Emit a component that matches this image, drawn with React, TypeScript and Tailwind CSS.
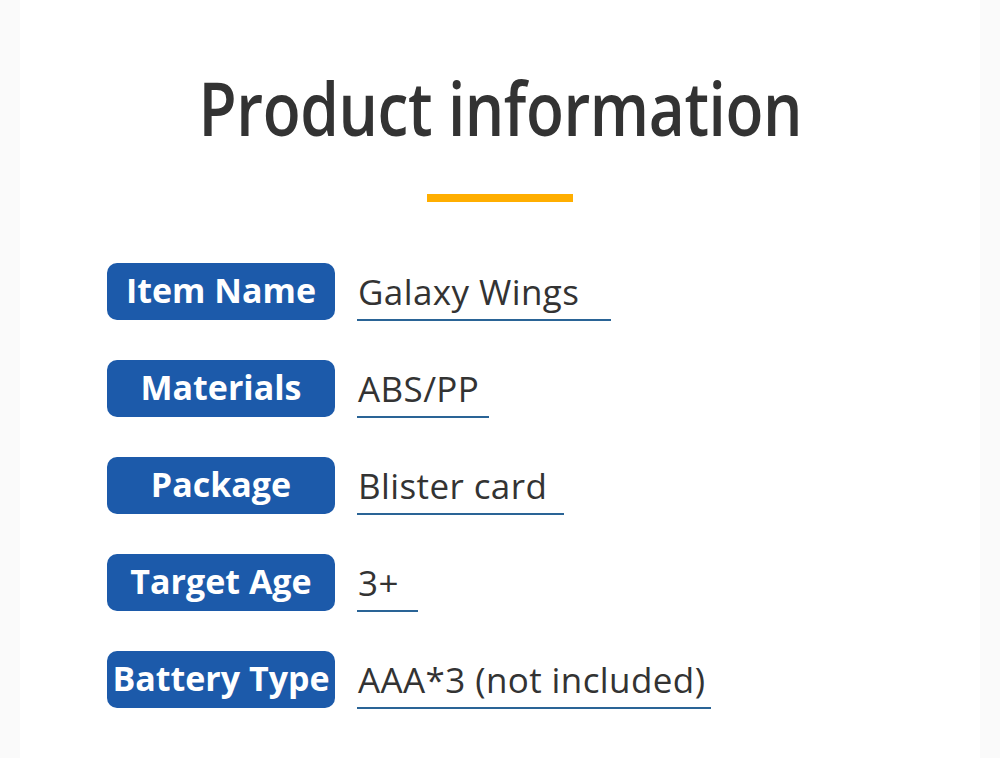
import React from "react";

const rows = [
  { label: "Item Name", value: "Galaxy Wings", w: 254 },
  { label: "Materials", value: "ABS/PP", w: 132 },
  { label: "Package", value: "Blister card", w: 207 },
  { label: "Target Age", value: "3+", w: 61 },
  { label: "Battery Type", value: "AAA*3 (not included)", w: 354 },
];

export default function App() {
  return (
    <div
      className="w-[1000px] h-[758px] bg-[#fafafa] flex justify-center overflow-hidden"
      style={{ fontFamily: '"Open Sans", "Noto Sans", sans-serif' }}
    >
      <div className="w-[960px] h-full bg-white flex flex-col items-center">
        <h1 className="mt-[62px] text-[74px] leading-[92px] font-semibold text-[#333333] tracking-[-0.5px] whitespace-nowrap scale-x-[0.84]">
          Product information
        </h1>
        <div className="mt-[40px] w-[146px] h-[8px] bg-[#ffae00]" />
        <div className="mt-[61px] self-start ml-[87px] flex flex-col gap-[40px]">
          {rows.map((r) => (
            <div key={r.label} className="flex items-start h-[57px]">
              <div className="w-[228px] h-[57px] rounded-[10px] bg-[#1c5aaa] flex items-center justify-center text-white text-[34px] font-bold leading-none pb-[3px] whitespace-nowrap">
                {r.label}
              </div>
              <div className="ml-[22px] flex flex-col">
                <div className="h-[56px] flex items-center text-[35px] leading-none tracking-[0.4px] text-[#333333] pl-[1px] pt-[1px] whitespace-nowrap">
                  {r.value}
                </div>
                <div className="h-[2px] bg-[#2a6496]" style={{ width: r.w }} />
              </div>
            </div>
          ))}
        </div>
      </div>
    </div>
  );
}
